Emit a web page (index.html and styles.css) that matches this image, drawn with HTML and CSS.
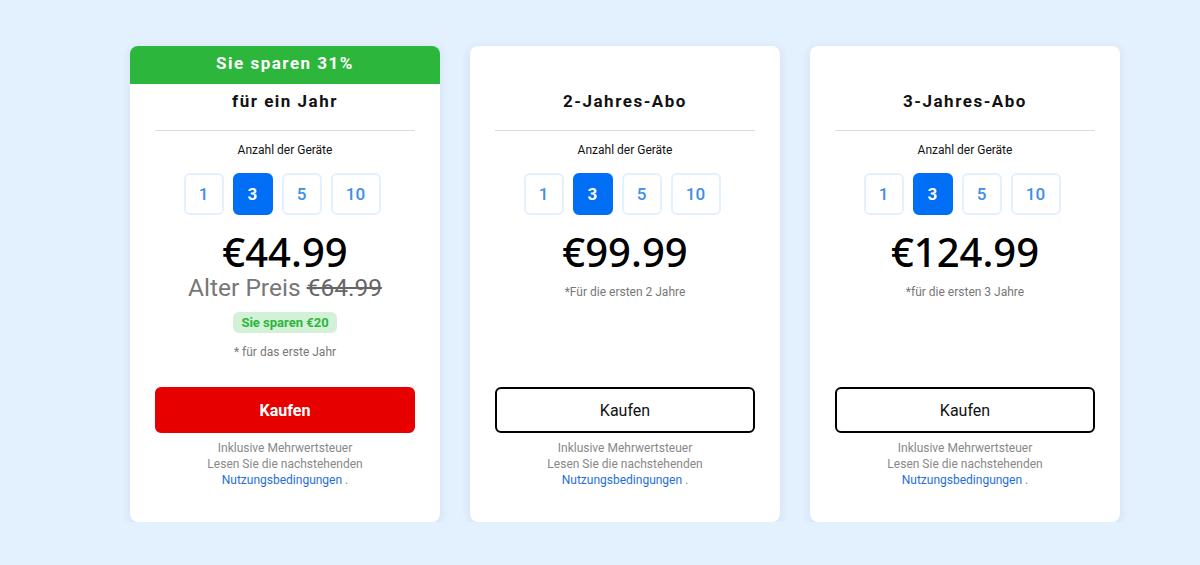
FILE: index.html
```html
<!DOCTYPE html>
<html lang="de">
<head>
    <meta charset="UTF-8">
    <meta name="viewport" content="width=device-width, initial-scale=1.0">
    <title>Abo-Preise</title>
    <link rel="stylesheet" href="styles.css">
</head>
<body>

<div class="plans">
    <!-- 1 Jahr -->
    <div class="card">
        <div class="banner">Sie sparen 31%</div>
        <div class="card-top">
            <h3 class="plan-title">für ein Jahr</h3>
            <div class="label">Anzahl der Geräte</div>
            <div class="devices">
                <span class="dev">1</span>
                <span class="dev active">3</span>
                <span class="dev">5</span>
                <span class="dev wide">10</span>
            </div>
            <div class="price">€44.99</div>
            <div class="old-price">Alter Preis <s>€64.99</s></div>
            <span class="save">Sie sparen €20</span>
            <div class="note">* für das erste Jahr</div>
        </div>
        <div class="card-bottom">
            <button class="buy buy-red">Kaufen</button>
            <p class="legal">Inklusive Mehrwertsteuer<br>Lesen Sie die nachstehenden<br><a href="#">Nutzungsbedingungen</a> .</p>
        </div>
    </div>

    <!-- 2 Jahre -->
    <div class="card">
        <div class="banner empty"></div>
        <div class="card-top">
            <h3 class="plan-title">2-Jahres-Abo</h3>
            <div class="label">Anzahl der Geräte</div>
            <div class="devices">
                <span class="dev">1</span>
                <span class="dev active">3</span>
                <span class="dev">5</span>
                <span class="dev wide">10</span>
            </div>
            <div class="price">€99.99</div>
            <div class="note note-tight">*Für die ersten 2 Jahre</div>
        </div>
        <div class="card-bottom">
            <button class="buy">Kaufen</button>
            <p class="legal">Inklusive Mehrwertsteuer<br>Lesen Sie die nachstehenden<br><a href="#">Nutzungsbedingungen</a> .</p>
        </div>
    </div>

    <!-- 3 Jahre -->
    <div class="card">
        <div class="banner empty"></div>
        <div class="card-top">
            <h3 class="plan-title">3-Jahres-Abo</h3>
            <div class="label">Anzahl der Geräte</div>
            <div class="devices">
                <span class="dev">1</span>
                <span class="dev active">3</span>
                <span class="dev">5</span>
                <span class="dev wide">10</span>
            </div>
            <div class="price">€124.99</div>
            <div class="note note-tight">*für die ersten 3 Jahre</div>
        </div>
        <div class="card-bottom">
            <button class="buy">Kaufen</button>
            <p class="legal">Inklusive Mehrwertsteuer<br>Lesen Sie die nachstehenden<br><a href="#">Nutzungsbedingungen</a> .</p>
        </div>
    </div>
</div>

</body>
</html>
```

FILE: styles.css
```css
body {
    margin: 0;
    background: #e3f0fd;
    font-family: Roboto, "Liberation Sans", sans-serif;
    color: #111;
}
.plans {
    display: flex;
    gap: 30px;
    padding: 46px 0 0 130px;
}
.card {
    width: 310px;
    background: #fff;
    border-radius: 8px;
    box-shadow: 0 2px 8px rgba(80, 120, 170, 0.15);
    display: flex;
    flex-direction: column;
    text-align: center;
    overflow: hidden;
    padding-bottom: 34px;
}
.banner {
    height: 38px;
    line-height: 35px;
    background: #2db63c;
    color: #fff;
    font-weight: 700;
    font-size: 17px;
    letter-spacing: 1.5px;
}
.banner.empty {
    background: transparent;
}
.card-top {
    padding: 0 25px;
    display: flex;
    flex-direction: column;
    align-items: center;
}
.plan-title {
    width: 100%;
    margin: 7px 0 0;
    padding-bottom: 19px;
    border-bottom: 1px solid #dcdcdc;
    font-size: 17px;
    line-height: 20px;
    font-weight: 700;
    letter-spacing: 1.5px;
}
.label {
    margin-top: 12px;
    font-size: 12px;
    line-height: 14px;
}
.devices {
    display: flex;
    gap: 9px;
    margin: 16px 6px 0 0;
}
.dev {
    width: 40px;
    height: 42px;
    box-sizing: border-box;
    border: 2px solid #e3f0fd;
    border-radius: 6px;
    display: flex;
    align-items: center;
    justify-content: center;
    color: #3d8fe8;
    font-size: 17px;
    font-weight: 500;
}
.dev.wide {
    width: 50px;
}
.dev.active {
    background: #006ef5;
    border-color: #006ef5;
    color: #fff;
    font-weight: 700;
}
.price {
    margin-top: 15px;
    font-family: "Noto Sans", "Open Sans", sans-serif;
    font-size: 40px;
    line-height: 44px;
    font-weight: 500;
    color: #000;
}
.old-price {
    font-size: 24.5px;
    line-height: 28px;
    color: #777;
}
.old-price s {
    color: #666;
}
.save {
    margin-top: 10px;
    padding: 2px 8px;
    background: #d3f1d7;
    color: #2db63c;
    border-radius: 6px;
    font-size: 13px;
    line-height: 17px;
    font-weight: 700;
}
.note {
    margin-top: 12px;
    font-size: 12px;
    line-height: 14px;
    color: #777;
}
.note-tight {
    margin-top: 11px;
}
.card-bottom {
    margin-top: auto;
    padding: 28px 25px 0;
}
.buy {
    width: 100%;
    height: 46px;
    border-radius: 6px;
    border: 2px solid #000;
    background: #fff;
    color: #111;
    font-family: Roboto, sans-serif;
    font-size: 16px;
    cursor: pointer;
}
.buy-red {
    background: #e60000;
    border-color: #e60000;
    color: #fff;
    font-weight: 700;
}
.legal {
    margin: 7px 0 0;
    font-size: 12px;
    line-height: 16px;
    color: #888;
}
.legal a {
    color: #1f6fd8;
    text-decoration: none;
}
```
